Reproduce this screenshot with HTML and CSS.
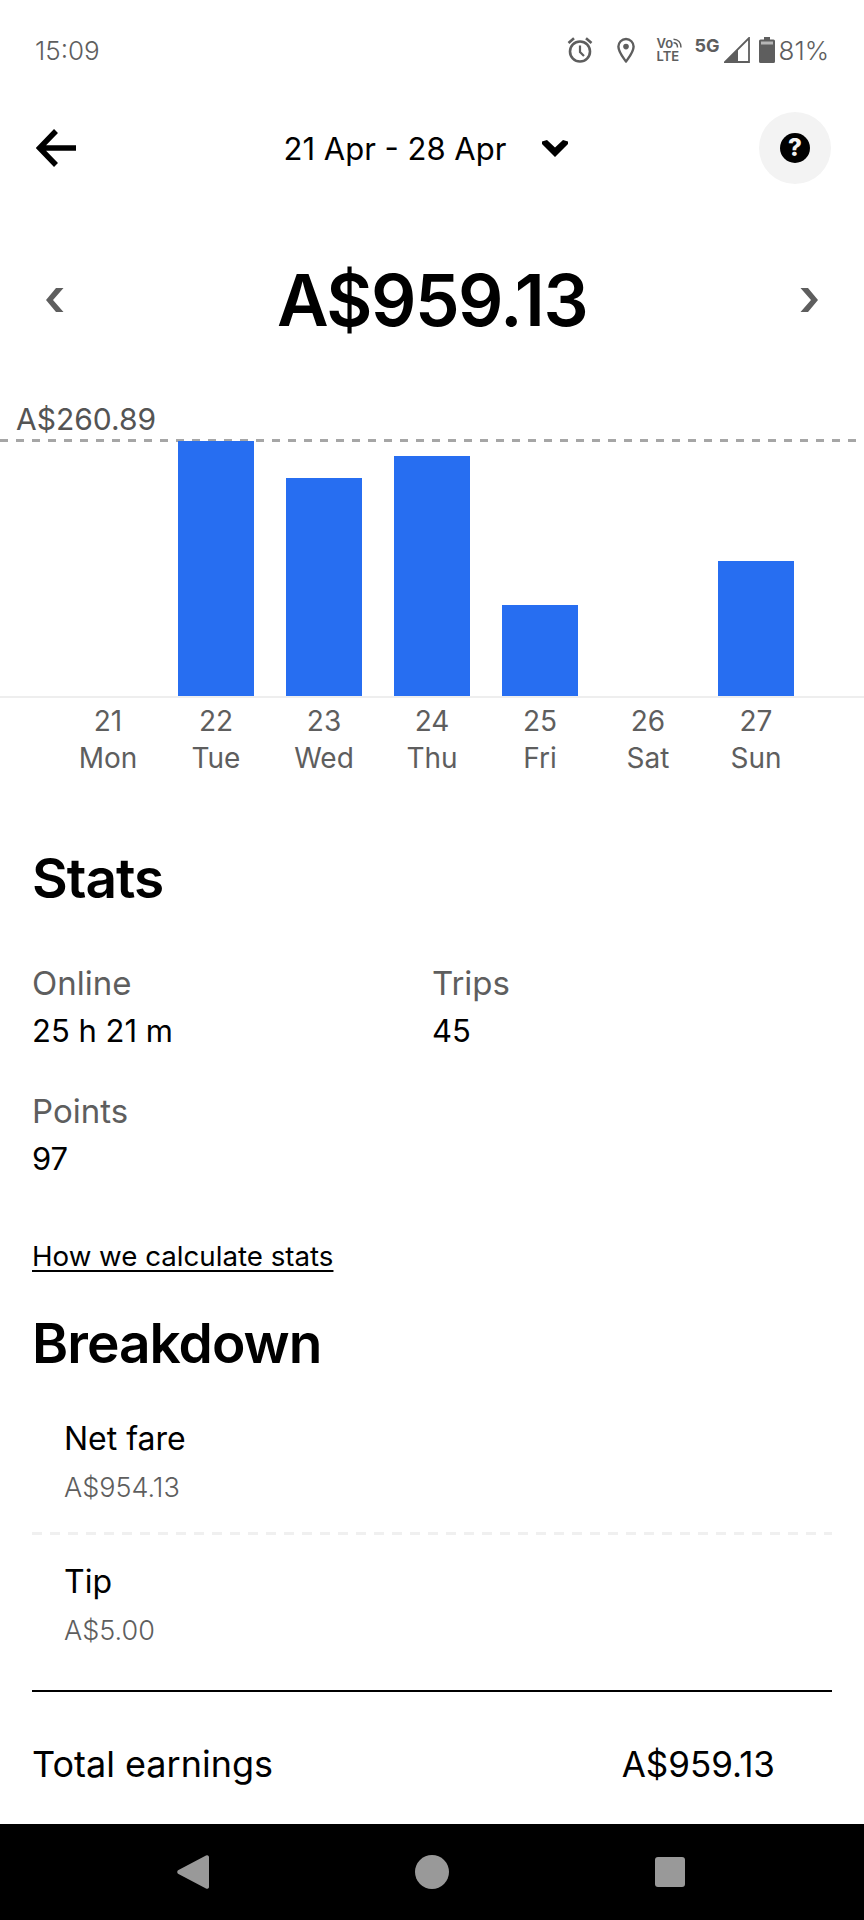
FILE: index.html
```html
<!DOCTYPE html>
<html lang="en">
<head>
    <meta charset="UTF-8">
    <meta name="viewport" content="width=device-width, initial-scale=1.0">
    <title>Earnings</title>
    <link rel="stylesheet" href="styles.css">
</head>
<body>
    <div class="screen">
        <div class="status-bar">
            <span class="clock">15:09</span>
            <div class="status-icons">
                <svg class="ic-alarm" width="26" height="28" viewBox="0 0 26 28"><circle cx="13" cy="15.5" r="10" fill="none" stroke="#5e5e5e" stroke-width="2.6"/><path d="M13 9.5v6.5l4 4" fill="none" stroke="#5e5e5e" stroke-width="2.2"/><path d="M1.5 7 7 2.2M24.5 7 19 2.2" stroke="#5e5e5e" stroke-width="2.6" fill="none"/></svg>
                <svg class="ic-pin" width="18" height="26" viewBox="0 0 18 26"><path d="M9 24.5C5 19 1.4 15 1.4 9.6a7.6 7.6 0 0 1 15.2 0C16.6 15 13 19 9 24.5z" fill="none" stroke="#5e5e5e" stroke-width="2.4" stroke-linejoin="round"/><circle cx="9" cy="9.6" r="2.8" fill="#5e5e5e"/></svg>
                <div class="volte">
                    <span class="vo">Vo<svg width="9" height="10" viewBox="0 0 9 10"><path d="M0.5 1.2C5 1.2 8 4.500 8 9.500M0.500 4.800C3 4.800 4.500 6.800 4.500 9.500" fill="none" stroke="#5e5e5e" stroke-width="1.500"/></svg></span>
                    <span class="lte">LTE</span>
                </div>
                <span class="five-g">5G</span>
                <svg class="ic-signal" width="26" height="26" viewBox="0 0 26 26"><path d="M25 1v24H1z" fill="none" stroke="#5e5e5e" stroke-width="1.800"/><path d="M1 25 14 12v13z" fill="#5e5e5e"/></svg>
                <svg class="ic-battery" width="16" height="26" viewBox="0 0 16 26"><path d="M5 0h6v2.500h3.500a1.500 1.500 0 0 1 1.500 1.500v20.500a1.500 1.500 0 0 1-1.500 1.500h-13A1.500 1.500 0 0 1 0 24.500V4a1.500 1.500 0 0 1 1.500-1.500H5z" fill="#5e5e5e"/><rect x="2" y="4.500" width="12" height="3" fill="#fff" opacity=".55"/></svg>
                <span class="battery-pct">81%</span>
            </div>
        </div>

        <div class="top-bar">
            <svg class="back-arrow" width="42" height="38" viewBox="0 0 42 38"><path d="M40 19H4M20 2 3.500 19 20 36" fill="none" stroke="#000" stroke-width="5.500"/></svg>
            <div class="date-range">
                <span>21 Apr - 28 Apr</span>
                <svg width="26" height="17" viewBox="0 0 26 17"><path d="M0 1.500 5 0l8 7.500L21 0l5 1.500V4L13 17 0 4z" fill="#000"/></svg>
            </div>
            <div class="help-btn">
                <span class="help-glyph">?</span>
            </div>
        </div>

        <div class="amount-row">
            <svg width="18" height="24" viewBox="0 0 18 24"><path d="M17.500 0 7 12l10.500 12H10L0 12 10 0z" fill="#5e5e5e"/></svg>
            <h1 class="amount">A$959.13</h1>
            <svg width="18" height="24" viewBox="0 0 18 24"><path d="M.5 0 11 12 .5 24H8l10-12L8 0z" fill="#5e5e5e"/></svg>
        </div>

        <div class="chart">
            <div class="chart-max">A$260.89</div>
            <div class="plot">
                <div class="slot"></div>
                <div class="slot"><div class="bar" style="height: 255px"></div></div>
                <div class="slot"><div class="bar" style="height: 218px"></div></div>
                <div class="slot"><div class="bar" style="height: 240px"></div></div>
                <div class="slot"><div class="bar" style="height: 91px"></div></div>
                <div class="slot"></div>
                <div class="slot"><div class="bar" style="height: 135px"></div></div>
            </div>
            <div class="axis">
                <div class="tick">21<br>Mon</div>
                <div class="tick">22<br>Tue</div>
                <div class="tick">23<br>Wed</div>
                <div class="tick">24<br>Thu</div>
                <div class="tick">25<br>Fri</div>
                <div class="tick">26<br>Sat</div>
                <div class="tick">27<br>Sun</div>
            </div>
        </div>

        <section class="stats">
            <h2>Stats</h2>
            <div class="stats-grid">
                <div class="stat"><div class="stat-label">Online</div><div class="stat-value">25 h 21 m</div></div>
                <div class="stat"><div class="stat-label">Trips</div><div class="stat-value">45</div></div>
                <div class="stat"><div class="stat-label">Points</div><div class="stat-value">97</div></div>
            </div>
            <a class="stats-link" href="#">How we calculate stats</a>
        </section>

        <section class="breakdown">
            <h2>Breakdown</h2>
            <div class="line-item">
                <div class="item-name">Net fare</div>
                <div class="item-amount">A$954.13</div>
            </div>
            <div class="line-item">
                <div class="item-name">Tip</div>
                <div class="item-amount">A$5.00</div>
            </div>
            <div class="total">
                <span>Total earnings</span>
                <span class="total-amount">A$959.13</span>
            </div>
        </section>

        <div class="nav-bar">
            <svg width="32" height="34" viewBox="0 0 32 34"><path d="M29 .5 1.500 15a2.200 2.200 0 0 0 0 4L29 33.500a2 2 0 0 0 3-1.800V2.300a2 2 0 0 0-3-1.800z" fill="#999"/></svg>
            <div class="nav-circle"></div>
            <div class="nav-square"></div>
        </div>
    </div>
</body>
</html>
```

FILE: styles.css
```css
* {
    box-sizing: border-box;
}
body {
    margin: 0;
    font-family: 'Inter', 'Roboto', sans-serif;
    background: #fff;
    color: #000;
}
.screen {
    width: 864px;
    height: 1920px;
    display: flex;
    flex-direction: column;
    overflow: hidden;
}
.status-bar {
    height: 101px;
    padding: 36px 35px 0 35px;
    display: flex;
    justify-content: space-between;
    align-items: flex-start;
    color: #5e5e5e;
}
.clock {
    font-size: 26px;
    font-weight: 300;
    line-height: 30px;
}
.status-icons {
    display: flex;
    align-items: center;
    height: 28px;
}
.ic-alarm {
    margin-right: 24px;
}
.ic-pin {
    margin-right: 22px;
}
.volte {
    width: 30px;
    margin-right: 8px;
    font-size: 13px;
    font-weight: 600;
    line-height: 13px;
}
.vo, .lte {
    display: block;
    white-space: nowrap;
}
.five-g {
    font-size: 18px;
    font-weight: 700;
    line-height: 16px;
    width: 29px;
    margin-top: -9px;
}
.ic-signal {
    margin-right: 9px;
}
.ic-battery {
    margin-right: 4px;
}
.battery-pct {
    font-size: 26px;
    font-weight: 300;
    line-height: 28px;
    margin-top: 2px;
}
.top-bar {
    height: 94px;
    padding: 0 33px 0 36px;
    display: flex;
    align-items: center;
    justify-content: space-between;
}
.date-range {
    display: flex;
    align-items: center;
    gap: 36px;
    font-size: 31px;
    margin-left: 15px;
}
.help-btn {
    width: 72px;
    height: 72px;
    border-radius: 50%;
    background: #f3f3f3;
    display: flex;
    align-items: center;
    justify-content: center;
}
.help-glyph {
    width: 30px;
    height: 30px;
    border-radius: 50%;
    background: #000;
    color: #f3f3f3;
    font-size: 24px;
    font-weight: 800;
    line-height: 30px;
    text-align: center;
}
.amount-row {
    height: 106px;
    margin-top: 52px;
    padding: 0 46px;
    display: flex;
    align-items: center;
    justify-content: space-between;
}
.amount {
    margin: 0;
    font-size: 71px;
    font-weight: 600;
    letter-spacing: -1.5px;
}
.chart {
    margin-top: 48px;
}
.chart-max {
    height: 38px;
    padding-left: 16px;
    font-size: 30px;
    line-height: 37px;
    color: #545454;
}
.plot {
    height: 259px;
    padding: 0 54px;
    display: grid;
    grid-template-columns: repeat(7, 108px);
    align-items: end;
    background: repeating-linear-gradient(90deg, #a6a6a6 0 8px, transparent 8px 16px) top / 100% 3px no-repeat;
    border-bottom: 2px solid #eee;
}
.slot {
    display: flex;
    justify-content: center;
    align-items: flex-end;
}
.bar {
    width: 76px;
    background: #276ef1;
}
.axis {
    padding: 5px 54px 0;
    display: grid;
    grid-template-columns: repeat(7, 108px);
}
.tick {
    font-size: 28px;
    line-height: 37px;
    text-align: center;
    color: #5e5e5e;
}
.stats {
    padding: 0 32px;
    margin-top: 69px;
}
h2 {
    margin: 0;
    font-size: 55px;
    font-weight: 600;
    line-height: 64px;
    letter-spacing: -1px;
}
.stats-grid {
    margin-top: 53px;
    display: grid;
    grid-template-columns: 400px 1fr;
    row-gap: 36px;
}
.stat-label {
    font-size: 33px;
    line-height: 40px;
    color: #5e5e5e;
}
.stat-value {
    margin-top: 4px;
    font-size: 31px;
    line-height: 48px;
}
.stats-link {
    display: block;
    width: fit-content;
    margin-top: 56px;
    font-size: 27.7px;
    line-height: 34px;
    color: #000;
    text-underline-offset: 4px;
}
.breakdown {
    padding: 0 32px;
    margin-top: 38px;
}
.line-item {
    height: 160px;
    padding: 42px 32px 0;
    background: repeating-linear-gradient(90deg, #f0f0f0 0 10px, transparent 10px 18px) bottom / 100% 3px no-repeat;
}
.line-item + .line-item {
    height: 155px;
    padding-top: 25px;
    background: none;
}
.item-name {
    font-size: 32px;
    line-height: 44px;
}
.item-amount {
    margin-top: 7px;
    font-size: 27px;
    font-weight: 300;
    line-height: 40px;
    color: #5e5e5e;
}
.total {
    border-top: 2px solid #000;
    padding: 50px 57px 0 0;
    display: flex;
    justify-content: space-between;
    font-size: 36px;
    line-height: 44px;
}
.total-amount {
    font-size: 35px;
}
.nav-bar {
    margin-top: auto;
    height: 96px;
    background: #000;
    padding: 0 179px 0 177px;
    display: flex;
    align-items: center;
    justify-content: space-between;
}
.nav-circle {
    width: 34px;
    height: 34px;
    border-radius: 50%;
    background: #999;
}
.nav-square {
    width: 30px;
    height: 30px;
    border-radius: 3px;
    background: #999;
}
```
